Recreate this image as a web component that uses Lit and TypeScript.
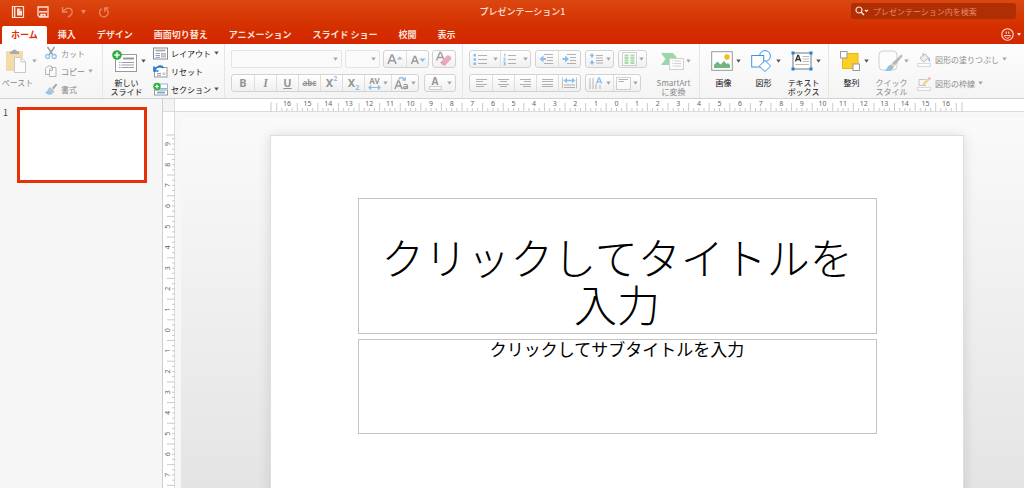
import { LitElement, html, svg, css, TemplateResult } from "lit";
import { customElement, property } from "lit/decorators.js";
import { classMap } from "lit/directives/class-map.js";

const FONT = css`"Noto Sans CJK JP", "Noto Sans", sans-serif`;

/** Wraps icon shapes in an svg whose user units are CSS pixels. */
const icon = (w: number, h: number, body: unknown) =>
  html`<svg width=${w} height=${h} viewBox="0 0 ${w} ${h}" fill="none" aria-hidden="true">${body}</svg>`;

const caret = html`<svg class="caret" width="5" height="4" viewBox="0 0 5 4" aria-hidden="true"><path d="M.3 .4h4.4L2.5 3.8z" fill="currentColor" /></svg>`;

/** Horizontal strokes, each given as [x1, x2, y]. */
const bars = (list: number[][], color = "#6d6d6d", width = 1) =>
  svg`<path d=${list.map(([a, b, y]) => `M${a} ${y}H${b}`).join("")} stroke=${color} stroke-width=${width} />`;

const blue = "#1f86e6";

const icons = {
  file: icon(14, 14, svg`<path d="M1.5 1.5h11v11h-11z" stroke="currentColor" stroke-width="1.2"/><path d="M3.7 2v10" stroke="currentColor" stroke-width="1.4"/><path d="M6 3.5h3.2L11 5.300v5.200H6z" fill="currentColor"/><path d="M9 3.500v2h2" stroke="#d93d0b" stroke-width=".7"/>`),
  save: icon(12, 12, svg`<path d="M1 1h10v10H2.500L1 9.500z" stroke="currentColor" stroke-width="1.300"/><path d="M2 5.800h8" stroke="currentColor" stroke-width="1.400"/><path d="M3.300 7.800h5.400V11H7V9.200H5.600V11H3.300z" fill="currentColor"/>`),
  undo: icon(13, 12, svg`<path d="M1.500 1v5h5M2 5.500C4.500 2 8.500 1.300 10.500 3.500 12.800 6.500 10 9.500 7 11" stroke="currentColor" stroke-width="1.400"/>`),
  redo: icon(12, 12, svg`<path d="M3.600 2.600C.8 4.500.8 8.500 3.500 10.200c2.500 1.500 5.800.2 6.500-2.500.6-2.300-.8-4.200-2.700-5.200M6.800 6V1.800h4" stroke="currentColor" stroke-width="1.300"/>`),
  search: icon(14, 10, svg`<circle cx="4" cy="4" r="3" stroke="currentColor" stroke-width="1.200"/><path d="M6.200 6.200 9 9" stroke="currentColor" stroke-width="1.500"/><path d="m9.800 3.800 1.600 1.600L13 3.800" stroke="currentColor" stroke-width="1.200"/>`),
  smile: icon(13, 13, svg`<circle cx="6.500" cy="6.500" r="5.700" stroke="currentColor" stroke-width="1.100"/><path d="M5.200 3.500v2.300M7.800 3.500v2.300" stroke="currentColor" stroke-width="1.100"/><path d="M3.500 7.500h6C9.200 9.300 8 10.100 6.500 10.100S3.800 9.300 3.500 7.500z" stroke="currentColor" stroke-width=".9"/>`),
  paste: icon(22, 26, svg`<rect x="1" y="3" width="17" height="20" rx="1" fill="#f2bd58"/><path d="M5 6V3.500h2C7.300.800 11.700.800 12 3.500h2V6z" fill="#5b5b5b"/><path d="M9.500 9.500h6.500l4.500 4.500v10.500h-11z" fill="#fff" stroke="#9a9a9a"/><path d="M16 9.500V14h4.500" stroke="#9a9a9a"/>`),
  cut: icon(14, 14, svg`<path d="M3.500 1 9 9M10.500 1 5 9" stroke="#444" stroke-width="1.500"/><circle cx="3.600" cy="10.500" r="2" stroke="#2f87cf" stroke-width="1.300"/><circle cx="10.200" cy="10.500" r="2" stroke="#2f87cf" stroke-width="1.300"/>`),
  copy: icon(14, 14, svg`<path d="M5 10.500H1.500V4.500L4 2h3.500v2" stroke="#777"/><path d="M5.500 12.500V6L8 3.500h4v9z" fill="#fff" stroke="#777"/><path d="M8.500 4v2.500H6" stroke="#777"/>`),
  brush: icon(14, 14, svg`<path d="M8 6 12 1.500l1.300 1.300L9.500 7.500z" fill="#555"/><path d="M6 5 10.500 9.500 8.800 11.200 4.300 6.700z" fill="#888"/><path d="M4.300 6.700 8.800 11.200C7 13.300 4.500 13.700.8 10.300 2.800 10 3.500 8.500 4.300 6.700z" fill="#3c95e0"/>`),
  newSlide: icon(26, 24, svg`<rect x="3.500" y="5.500" width="21" height="17" fill="#fff" stroke="#9a9a9a"/>${bars([[11, 22, 9.500]], "#9a9a9a", 2)}${bars([[7, 8.500, 13.500], [7, 8.500, 16], [7, 8.500, 18.500], [9.500, 22, 13.500], [9.500, 22, 16], [9.500, 22, 18.500]], "#9a9ab0")}<circle cx="5" cy="6" r="4.800" fill="#2fae43"/><path d="M5 3.300v5.400M2.300 6h5.400" stroke="#fff" stroke-width="1.500"/>`),
  layout: icon(15, 13, svg`<rect x=".5" y="1" width="14" height="11" fill="#fff" stroke="#8a8a8a"/>${bars([[2.500, 12.500, 3.500]], "#a8a8a8", 1.800)}${bars([[2.500, 7, 6.500], [2.500, 7, 8.500], [2.500, 7, 10.300]], "#8aa0c0")}<rect x="8.500" y="6.500" width="4" height="3.500" fill="#c9cdd6" stroke="#9a9fb0" stroke-width=".6"/>`),
  reset: icon(15, 14, svg`<rect x="1.500" y="3.500" width="12.500" height="9.500" fill="#fff" stroke="#9a9a9a"/>${bars([[4, 8, 9.500], [4, 8, 11.300]], "#9a9ab0")}<rect x="9.500" y="8.500" width="3" height="2.500" fill="#c9cdd6"/><path d="M1 2.500v4.500h4.500M1.600 6.500C3.500 2 8 .500 10.500 4" stroke="#1f7fd6" stroke-width="1.700"/>`),
  section: icon(15, 14, svg`<rect x="4.500" y="2" width="10" height="4.500" fill="#fff" stroke="#8fb7e0"/><rect x="1.500" y="8" width="13" height="5" fill="#fff" stroke="#9a9a9a"/>${bars([[4, 12, 10.500]], "#6aa5e4", 1.800)}<circle cx="4" cy="4.500" r="3.700" fill="#2fae43"/><path d="M4 2.500v4M2 4.500h4" stroke="#fff" stroke-width="1.200"/>`),
  grow: icon(16, 12, svg`<path d="M1 11 4.500 2h1L9 11M2.500 7.800h5" stroke="#444" stroke-width="1.600"/><path d="M10 6.500 12.800 3.500 15.500 6.500z" fill=${blue}/>`),
  shrink: icon(16, 12, svg`<path d="M1.500 11 4.400 3.500h1L8.300 11M2.800 8.300H7" stroke="#444" stroke-width="1.500"/><path d="M9.500 5.500h6L12.500 9z" fill=${blue}/>`),
  eraser: icon(18, 16, svg`<path d="M1.500 9.500 4.800 1.500h1L9 9M3 6.500h4.500" stroke="#444" stroke-width="1.400"/><path d="M5.500 11.500 12 4.500c1-.8 3 .3 4 1.600.5.800.4 1.600 0 2.200L10 14.500c-1.500.5-4-1-4.500-3z" fill="#e0607f"/><path d="M5.500 11.500c1-1 4 .5 4.500 3" stroke="#b94a64" stroke-width=".8"/>`),
  bullets: icon(15, 13, svg`<path d="M.5 1h2.500v2.500H.5zM.5 5.200h2.500v2.500H.5zM.5 9.500h2.500V12H.5z" fill=${blue}/>${bars([[5, 14, 2.500], [5, 14, 6.500], [5, 14, 10.500]])}`),
  numbers: icon(15, 13, svg`<path d="M1 1h1v2.500M.5 5.200h1.500v1.200L.7 7.700h1.800M.5 9.500h1.700V12H.5M1 10.700h1" stroke=${blue}/>${bars([[5, 13, 2.500], [5, 13, 6.500], [5, 13, 10.500]])}`),
  outdent: icon(16, 12, svg`<path d="M.5 6 4.500 2.500V5H7v2H4.500v2.500z" fill=${blue}/>${bars([[5, 14, 1.500], [8, 14, 4.500], [8, 14, 7.500], [5, 14, 10.500]])}`),
  indent: icon(16, 12, svg`<path d="M7 6 3 2.500V5H.5v2H3v2.500z" fill=${blue}/>${bars([[5, 14, 1.500], [8, 14, 4.500], [8, 14, 7.500], [5, 14, 10.500]])}`),
  leading: icon(15, 14, svg`<path d="M3 1 5.500 4H4v1.500H2V4H.5zM3 13 .5 10H2V8.500h2V10h1.500z" fill=${blue}/>${bars([[7, 14, 3.500], [7, 14, 6], [7, 14, 8.500], [7, 14, 11]])}`),
  columns: icon(15, 14, svg`<rect x=".5" y=".5" width="14" height="13" fill="#fff" stroke="#aaa"/><path d="M2.500 3.500h4M2.500 6h4M2.500 8.500h4M2.500 11h4M8.500 3.500h4M8.500 6h4M8.500 8.500h4M8.500 11h4" stroke="#5fc15f" stroke-width="1.800"/>`),
  left: icon(13, 10, bars([[1, 12, 1.500], [1, 8, 3.500], [1, 12, 6.500], [1, 9, 8.500]])),
  center: icon(13, 10, bars([[1, 12, 1.500], [3, 10, 3.500], [1, 12, 6.500], [3, 10, 8.500]])),
  right: icon(13, 10, bars([[1, 12, 1.500], [5, 12, 3.500], [1, 12, 6.500], [4, 12, 8.500]])),
  justify: icon(13, 10, bars([[1, 12, 1.500], [1, 12, 3.500], [1, 12, 6.500], [1, 12, 8.500]])),
  distribute: icon(15, 12, svg`<path d="M.5.500v11M14.500.500v11" stroke="#888"/><path d="M1.500 3.500 5 .8v2h5v-2l3.500 2.700L10 6.200v-2H5v2z" fill=${blue}/>${bars([[2, 13, 8], [2, 13, 10.500]])}`),
  direction: icon(16, 13, svg`<path d="M2 1v11M5 1v11M8 7v5M12 8v4" stroke="#777"/><path d="m8.500 6.500 2.300-5.500h.6l2.300 5.500M9.500 4.800h3.500" stroke=${blue} stroke-width="1.300"/>`),
  valign: icon(15, 13, svg`<rect x=".5" y=".5" width="14" height="12" fill="#fff" stroke="#aaa"/>${bars([[2.500, 12, 2.500], [2.500, 8, 4.500]])}`),
  changeCase: icon(15, 14, svg`<path d="M1 13 4 5h1l3 8M2.300 10h4.400" stroke="#444" stroke-width="1.500"/><path d="M9.500 8.800c2.500-1 4-.3 4 1.200v3M13.500 10.800c-3-.5-4.500.2-4.300 1.200.3 1 3 1 4.300-.5" stroke="#444" stroke-width="1.200"/><path d="M4.500 3.500C6 .8 9 .8 10.500 3.500M8.500 4h2.800V1.200" stroke=${blue} stroke-width="1.300"/>`),
  kerning: icon(13, 5, svg`<path d="M1 2.500h11M3.200.500l-2.200 2L3.200 4.500M9.800.500l2.200 2-2.200 2" stroke=${blue} stroke-width="1.200"/>`),
  smartart: icon(24, 18, svg`<path d="M1 1h12l5 6-5 6H1l4.500-6z" fill="#3bb45b"/><rect x="9.500" y="6.500" width="14" height="11" fill="#fff" stroke="#aaa"/>${bars([[12, 13, 9], [12, 13, 11.500], [12, 13, 14], [14, 21, 9], [14, 21, 11.500], [14, 21, 14]], "#aaa")}`),
  picture: icon(22, 20, svg`<rect x=".7" y=".7" width="20.600" height="18.600" fill="#fff" stroke="#999"/><path d="M3 17v-3l3.500-3.500 3 3L13 10l2.500 3 1.500-1 2 2v3z" fill="#6fb57c"/><circle cx="16" cy="6" r="2.700" fill="#f5bd1c"/>`),
  shapes: icon(22, 22, svg`<circle cx="14" cy="6" r="5.400" fill="#fff" stroke="#3f93e4"/><rect x=".7" y="5.500" width="12" height="11.500" fill="#fff" stroke="#3f93e4"/><path d="m14 10.500 5.700 5.500-5.700 5.500L8.300 16z" fill="#fff" stroke="#3f93e4"/>`),
  textbox: icon(22, 20, svg`<rect x="2" y="2" width="18" height="16" fill="#fff" stroke="#777"/><path d="m4.500 10.500 2.200-6h.8l2.200 6M5.500 8.500h3.200" stroke="#333" stroke-width="1.300"/>${bars([[11.500, 18, 5.500], [11.500, 18, 8], [11.500, 18, 10.500], [4.500, 18, 13.500]], "#bbb")}<path d="M.5.500h3v3h-3zM18.500.500h3v3h-3zM.5 16.500h3v3h-3zM18.500 16.500h3v3h-3z" fill="#1684e6"/>`),
  arrange: icon(20, 20, svg`<rect x="2.500" y="2.500" width="15.500" height="15" fill="#fbcf2a" stroke="#e8b80e"/><rect x=".5" y=".5" width="6.500" height="6.500" fill="#fff" stroke="#999"/><rect x="13" y="13" width="6.500" height="6.500" fill="#fff" stroke="#999"/>`),
  quick: icon(25, 22, svg`<rect x="1" y="1" width="18" height="19" rx="4" fill="#fff" stroke="#aaa"/><path d="M23.500 4.500c.8.500 1 1.300.5 2.200L17 15.500 14 13z" fill="#777"/><path d="M14 13 17 15.500l-1.500 2-3.500-2.500z" fill="#d8a860"/><path d="M12 15c1.800 0 3.500 1.200 3.500 2.700-1.500 3.500-5 3.500-9 3.300 2.800-1.500 2.500-5 5.500-6z" fill="#2f87cf"/>`),
  fill: icon(15, 15, svg`<rect x=".5" y="11.500" width="13" height="3" fill="#fff" stroke="#bbb"/><path d="m3 6 5-4 3.500 4-5 4z" fill="#d9e8f6" stroke="#777"/><path d="M6 4V.8" stroke="#777"/><path d="M11.500 6c1 1.500 1.500 2.500.5 3.500" stroke=${blue} stroke-width="1.500"/>`),
  outline: icon(15, 15, svg`<rect x=".5" y="11.500" width="13" height="3" fill="#fff" stroke="#bbb"/><path d="M9 3.500H2v6h7" stroke="#999"/><path d="m5 10 1-3 6-6 1.800 1.800-6 6z" fill="#f0b030"/><path d="m12 1 1.800 1.800-1 1L11 2z" fill="#e0607a"/>`),
};

/** Graduated scale: zero sits at the middle of the slide, counting up both ways. */
@customElement("slide-ruler")
class SlideRuler extends LitElement {
  @property({ type: Boolean, reflect: true }) vertical = false;
  @property({ type: Number }) reach = 16.5;
  @property({ type: Number }) lastLabel = 16;
  @property({ type: Number }) span = 33.55;

  static styles = css`
    :host { display: block; height: 12px; }
    :host([vertical]) { width: 11px; height: auto; display: flex; }
    svg { display: block; width: 100%; height: 12px; overflow: visible; }
    :host([vertical]) svg { width: 11px; height: auto; flex: 1; }
    text { font: 7px "Noto Sans", sans-serif; fill: #666; text-anchor: middle; }
    .tick { stroke: #cacaca; stroke-width: 1; }
  `;

  private at(cm: number) {
    return `${(50 + (cm / this.span) * 100).toFixed(3)}%`;
  }

  private tick(pos: string, from: number, to: number) {
    return this.vertical
      ? svg`<line class="tick" x1=${from} x2=${to} y1=${pos} y2=${pos} />`
      : svg`<line class="tick" y1=${from} y2=${to} x1=${pos} x2=${pos} />`;
  }

  render() {
    const marks: unknown[] = [];
    const last = this.reach * 4;
    for (let q = -last; q <= last; q++) {
      const pos = this.at(q / 4);
      marks.push(this.tick(pos, q % 4 !== 0 && q % 2 === 0 ? 4 : 9, 12));
      if (q % 4 === 0 && q / 4 <= this.lastLabel) {
        const label = Math.abs(q / 4);
        marks.push(
          this.vertical
            ? svg`<svg x="7" y=${pos} width="1" height="1" overflow="visible"><text transform="rotate(-90)">${label}</text></svg>`
            : svg`<text x=${pos} y="7">${label}</text>`
        );
      }
    }
    return html`<svg aria-hidden="true">${marks}${this.tick("0%", 3, 14)}${this.tick("100%", 3, 14)}</svg>`;
  }
}

@customElement("app-root")
class AppRoot extends LitElement {
  static styles = css`
    :host {
      display: flex; flex-direction: column; height: 100vh; overflow: hidden;
      font-family: ${FONT}; font-size: 8px; line-height: 9px; color: #111; background: #f6f6f6;
    }
    * { box-sizing: border-box; }
    svg { display: block; flex: none; }
    button, select, input { font: inherit; color: inherit; margin: 0; padding: 0; border: 0; background: none; border-radius: 0; }

    .top { background: linear-gradient(#db4710, #d43000 60%, #d32600); color: #fbe3dc; flex: none; }
    .titlebar { display: grid; grid-template-columns: 1fr auto 1fr; align-items: center; height: 24px; padding: 0 8px 0 11px; }
    .quick-access { display: flex; align-items: center; gap: 12px; }
    .quick-access .faded { opacity: .45; display: flex; align-items: center; gap: 7px; }
    .doc-title { font-size: 9px; font-weight: 500; line-height: 14px; padding-left: 18px; }
    .search { justify-self: end; display: flex; align-items: center; gap: 4px; width: 165px; height: 16px; padding: 0 4px; border-radius: 3px; background: #b02e04; margin-top: -2px; }
    .search input { flex: 1; min-width: 0; outline: 0; }
    .search input::placeholder { color: #e48a6c; opacity: 1; }

    .tabbar { display: flex; justify-content: space-between; align-items: flex-end; height: 20px; padding: 0 3px 0 2px; }
    .tabs { display: flex; gap: 1px; }
    .tab { height: 18px; padding: 0 10px; font-size: 9px; font-weight: 700; line-height: 18px; white-space: nowrap; }
    .tab.active { background: #fff; color: #dc3307; border-radius: 2px 2px 0 0; padding: 0 9px; }
    .feedback { display: flex; align-items: center; gap: 3px; height: 20px; }

    .ribbon { display: flex; flex: none; height: 55px; background: linear-gradient(#fdfdfd, #f4f4f4); border-bottom: 1px solid #d2d2d2; overflow: hidden; }
    .group { display: flex; flex: none; border-right: 1px solid #e6e6e6; }
    .group:last-child { border: 0; }
    .clipboard { padding-left: 2px; gap: 6px; width: 103px; }
    .slides { padding-left: 8px; gap: 6px; width: 122px; }
    .font { padding: 6px 6px 0; width: 238px; }
    .para { padding: 0 6px; gap: 12px; width: 237px; }
    .para .rows { padding-top: 6px; }
    .insert { padding: 0 7px 0 9px; gap: 8px; }
    .format { padding: 0 8px; gap: 8px; }

    .big { display: grid; grid-template-columns: 26px 6px; grid-template-rows: 34px 20px; align-items: center; justify-items: center; align-content: start; white-space: nowrap; height: 54px; }
    .big.wide { grid-template-columns: 28px 8px; }
    .big .label { align-self: start; padding-left: 3px; text-align: center; line-height: 9px; }
    .caret { color: #555; }
    .stack { display: grid; grid-auto-rows: 18px; align-items: center; justify-items: start; }
    .stack.pair { grid-auto-rows: 24px; padding-top: 3px; }
    .small { display: flex; align-items: center; gap: 3px; height: 18px; white-space: nowrap; }
    :disabled { opacity: .5; }

    .rows { display: grid; gap: 6px; align-content: start; flex: none; }
    .font .rows { flex: 1; }
    .row { display: flex; gap: 4px; height: 18px; }
    .font .row { gap: 0; justify-content: space-between; }
    .cluster { display: flex; border: 1px solid #d3d3d3; border-radius: 3px; background: linear-gradient(#fff, #f0f0f0); }
    .cluster button { display: flex; align-items: center; justify-content: center; gap: 3px; width: 22px; font: 700 11px/16px "Noto Sans", sans-serif; color: #333; opacity: 1; border-left: 1px solid #dedede; }
    .cluster button > * { opacity: .5; }
    .cluster button:first-child { border-left: 0; }
    .cluster button.menu { width: 27px; gap: 2px; }
    .cluster.split button.menu { width: 30px; gap: 5px; }
    .cluster button.tint { width: 30px; gap: 5px; }
    .italic { font-family: "Liberation Serif", serif; font-style: italic; font-size: 12px; }
    .under { text-decoration: underline; }
    .strike { font-size: 8px; text-decoration: line-through; }
    .script { color: #1f86e6; font-size: 7px; line-height: 7px; }
    .sup { align-self: flex-start; }
    .sub { align-self: flex-end; }
    .pairing { display: flex; }
    .stacked { display: grid; justify-items: center; font-size: 8px; line-height: 8px; }
    .tint .stacked { font-size: 10px; line-height: 10px; }
    .swatch { width: 13px; height: 4px; border: 1px solid #aaa; background: #fff; }
    .combo { display: grid; align-items: center; border: 1px solid #e4e4e4; border-radius: 2px; background: #fafafa; }
    .combo > * { grid-area: 1 / 1; }
    .combo select { appearance: none; width: 100%; height: 16px; }
    .combo .caret { justify-self: end; margin-right: 3px; opacity: .5; pointer-events: none; }
    .name { width: 111px; }
    .size { width: 35px; }

    .workspace { display: grid; grid-template-columns: 163px minmax(0, 1fr); flex: 1; min-height: 0; }
    .thumbs { margin: 0; padding: 8px 15px 0 2px; list-style: none; border-right: 1px solid #cfcfcf; background: #f6f6f6; }
    .thumbs li { display: grid; grid-template-columns: 15px 1fr; font-size: 9px; line-height: 12px; color: #444; }
    .thumbs .num { padding-left: 1px; }
    .thumb { display: block; width: 100%; aspect-ratio: 130 / 76; background: #fff; border: 3px solid #e6300a; }
    .canvas { display: grid; grid-template-columns: 12px minmax(0, 1fr); grid-template-rows: 13px auto 1fr; overflow: hidden; background: linear-gradient(#fbfbfb, #e4e4e4); }
    .corner { background: #f3f3f3; border-right: 1px solid #dcdcdc; border-bottom: 1px solid #dcdcdc; }
    .hruler { padding: 0 62px 0 96px; background: #fff; border-bottom: 1px solid #dcdcdc; }
    .vruler { grid-row: 2 / 4; grid-column: 1; background: #fff; border-right: 1px solid #dcdcdc; }
    .scale { grid-row: 2; grid-column: 1; display: flex; padding-top: 23px; }
    .margin { grid-row: 2 / 4; grid-column: 2; border: solid #f7f7f7; border-width: 6px 0 0 6px; }
    .stage { grid-row: 2; grid-column: 2; padding: 23px 60px 0 95px; }
    .slide { aspect-ratio: 16 / 9; padding-top: 9%; background: #fff; border: 1px solid #dedede; box-shadow: 0 1px 12px rgba(0, 0, 0, .12); display: grid; grid-template-columns: 75%; grid-template-rows: 136px 95px; gap: 5px; justify-content: center; align-content: start; color: #000; text-align: center; }
    .slide h1, .slide p { margin: 0; border: 1px solid #c3c3c3; }
    .slide h1 { display: flex; align-items: flex-end; justify-content: center; font-size: 43px; line-height: 47px; font-weight: 300; padding: 0 20px 6px; }
    .slide p { font-size: 17px; line-height: 18px; font-weight: 400; }
  `;

  private big(pic: TemplateResult, lines: string[], disabled = false, wide = false) {
    const label = lines.map((line, i) => (i ? html`<br />${line}` : line));
    return html`<button class=${classMap({ big: true, wide })} ?disabled=${disabled}>${pic}${caret}<span class="label">${label}</span></button>`;
  }

  private small(pic: TemplateResult, label: string, menu = false, disabled = false) {
    return html`<button class="small" ?disabled=${disabled}>${pic}<span>${label}</span>${menu ? caret : ""}</button>`;
  }

  private tool(label: string, body: unknown, menu = false) {
    return html`<button class=${classMap({ menu })} disabled aria-label=${label}>${body}${menu ? caret : ""}</button>`;
  }

  private renderTop() {
    const tabs = ["ホーム", "挿入", "デザイン", "画面切り替え", "アニメーション", "スライド ショー", "校閲", "表示"];
    return html`<header class="top">
      <div class="titlebar">
        <div class="quick-access">
          <button aria-label="ファイル">${icons.file}</button>
          <button aria-label="保存">${icons.save}</button>
          <button class="faded" aria-label="元に戻す">${icons.undo}<svg width="5" height="4" viewBox="0 0 5 4"><path d="M0 0h5L2.500 4z" fill="currentColor" /></svg></button>
          <button class="faded" aria-label="やり直し">${icons.redo}</button>
        </div>
        <span class="doc-title">プレゼンテーション1</span>
        <label class="search">${icons.search}<input type="text" aria-label="検索" placeholder="プレゼンテーション内を検索" /></label>
      </div>
      <div class="tabbar">
        <nav class="tabs">${tabs.map((t, i) => html`<button class=${classMap({ tab: true, active: i === 0 })}>${t}</button>`)}</nav>
        <button class="feedback" aria-label="フィードバック">${icons.smile}<svg width="4" height="3" viewBox="0 0 4 3"><path d="M0 0h4L2 3z" fill="currentColor" /></svg></button>
      </div>
    </header>`;
  }

  private renderFont() {
    return html`<div class="group font"><div class="rows">
      <div class="row">
        <div class="combo name"><select disabled aria-label="フォント"></select>${caret}</div>
        <div class="combo size"><select disabled aria-label="フォント サイズ"></select>${caret}</div>
        <div class="cluster">${this.tool("拡大", icons.grow)}${this.tool("縮小", icons.shrink)}</div>
        <div class="cluster">${this.tool("書式のクリア", icons.eraser)}</div>
      </div>
      <div class="row">
        <div class="cluster">
          ${this.tool("太字", html`<span>B</span>`)}
          ${this.tool("斜体", html`<span class="italic">I</span>`)}
          ${this.tool("下線", html`<span class="under">U</span>`)}
          ${this.tool("取り消し線", html`<span class="strike">abc</span>`)}
          ${this.tool("上付き", html`<span class="pairing">X<span class="script sup">2</span></span>`)}
          ${this.tool("下付き", html`<span class="pairing">X<span class="script sub">2</span></span>`)}
          ${this.tool("文字の間隔", html`<span class="stacked">AV${icons.kerning}</span>`, true)}
          ${this.tool("文字種の変換", icons.changeCase, true)}
        </div>
        <div class="cluster"><button class="tint" disabled aria-label="フォントの色"><span class="stacked">A<span class="swatch"></span></span>${caret}</button></div>
      </div>
    </div></div>`;
  }

  private renderParagraph() {
    return html`<div class="group para">
      <div class="rows">
        <div class="row">
          <div class="cluster split">${this.tool("箇条書き", icons.bullets, true)}${this.tool("段落番号", icons.numbers, true)}</div>
          <div class="cluster">${this.tool("インデントを減らす", icons.outdent)}${this.tool("インデントを増やす", icons.indent)}</div>
          <div class="cluster">${this.tool("行間", icons.leading, true)}</div>
          <div class="cluster">${this.tool("段組み", icons.columns, true)}</div>
        </div>
        <div class="row">
          <div class="cluster">
            ${this.tool("左揃え", icons.left)}${this.tool("中央揃え", icons.center)}${this.tool("右揃え", icons.right)}${this.tool("両端揃え", icons.justify)}${this.tool("均等割り付け", icons.distribute)}
          </div>
          <div class="cluster">${this.tool("文字列の方向", icons.direction, true)}${this.tool("文字の配置", icons.valign, true)}</div>
        </div>
      </div>
      ${this.big(icons.smartart, ["SmartArt", "に変換"], true)}
    </div>`;
  }

  private renderRibbon() {
    return html`<div class="ribbon">
      <div class="group clipboard">
        ${this.big(icons.paste, ["ペースト"], true, true)}
        <div class="stack">${this.small(icons.cut, "カット", false, true)}${this.small(icons.copy, "コピー", true, true)}${this.small(icons.brush, "書式", false, true)}</div>
      </div>
      <div class="group slides">
        ${this.big(icons.newSlide, ["新しい", "スライド"], false, true)}
        <div class="stack">${this.small(icons.layout, "レイアウト", true)}${this.small(icons.reset, "リセット")}${this.small(icons.section, "セクション", true)}</div>
      </div>
      ${this.renderFont()} ${this.renderParagraph()}
      <div class="group insert">
        ${this.big(icons.picture, ["画像"])}${this.big(icons.shapes, ["図形"])}${this.big(icons.textbox, ["テキスト", "ボックス"])}
      </div>
      <div class="group format">
        ${this.big(icons.arrange, ["整列"])}${this.big(icons.quick, ["クイック", "スタイル"], true)}
        <div class="stack pair">${this.small(icons.fill, "図形の塗りつぶし", true, true)}${this.small(icons.outline, "図形の枠線", true, true)}</div>
      </div>
    </div>`;
  }

  render() {
    return html`${this.renderTop()} ${this.renderRibbon()}
      <main class="workspace">
        <ol class="thumbs"><li><span class="num">1</span><button class="thumb" aria-label="スライド 1"></button></li></ol>
        <div class="canvas">
          <div class="corner"></div>
          <div class="hruler"><slide-ruler></slide-ruler></div>
          <div class="vruler"></div>
          <div class="scale"><slide-ruler vertical .reach=${9.25} .lastLabel=${7} .span=${18.87}></slide-ruler></div>
          <div class="margin"></div>
          <div class="stage">
            <section class="slide"><h1>クリックしてタイトルを入力</h1><p>クリックしてサブタイトルを入力</p></section>
          </div>
        </div>
      </main>`;
  }
}
